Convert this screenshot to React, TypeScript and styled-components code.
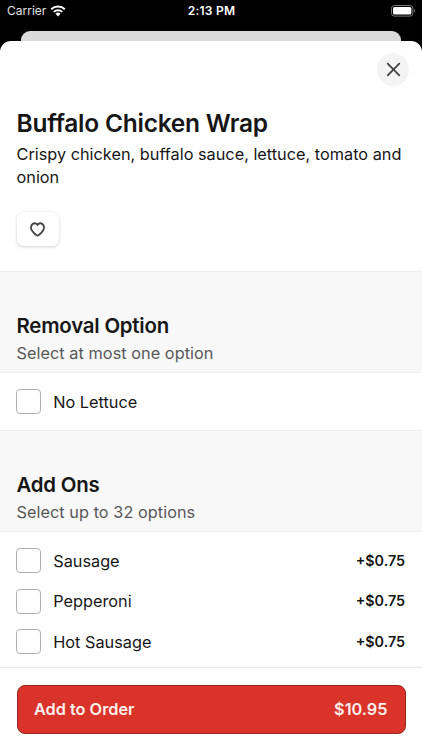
import React from "react";
import styled, { createGlobalStyle } from "styled-components";

const GlobalStyle = createGlobalStyle`
  * { box-sizing: border-box; }
  html, body { margin: 0; padding: 0; background: #000; }
  button { font: inherit; border: 0; margin: 0; padding: 0; }
  h1, h2, p { margin: 0; }
`;

const Screen = styled.div`
  width: 422px;
  height: 750px;
  overflow: hidden;
  display: flex;
  flex-direction: column;
  background: #000;
  color: #161616;
  font-family: Inter, sans-serif;
`;

const StatusBar = styled.div`
  flex: none;
  height: 31px;
  padding: 0 6px 9px 7px;
  display: grid;
  grid-template-columns: 1fr auto 1fr;
  align-items: center;
  color: #fff;
  font-size: 12px;
  line-height: 22px;
`;

const Carrier = styled.div`
  display: flex;
  align-items: center;
  gap: 4px;
  color: #e4e4e4;
`;

const Clock = styled.div`
  font-weight: 600;
  letter-spacing: 0.25px;
`;

const BatterySlot = styled.div`
  display: flex;
  justify-content: flex-end;
`;

const BackSheet = styled.div`
  flex: none;
  height: 10px;
  margin: 0 21px;
  border-radius: 9px 9px 0 0;
  background: #dadada;
`;

const Sheet = styled.main`
  flex: 1;
  min-height: 0;
  display: flex;
  flex-direction: column;
  background: #fff;
  border-radius: 11px 11px 0 0;
`;

const Intro = styled.header`
  flex: none;
  height: 230px;
  padding: 12px 13px 0 16.5px;
  display: flex;
  flex-direction: column;
`;

const CloseButton = styled.button`
  align-self: flex-end;
  width: 32px;
  height: 33px;
  border-radius: 50%;
  background: #f4f4f4;
  display: grid;
  place-items: center;
`;

const Title = styled.h1`
  margin-top: 22px;
  font-size: 24.5px;
  line-height: 30px;
  font-weight: 600;
  letter-spacing: -0.24px;
  white-space: nowrap;
`;

const Description = styled.p`
  margin-top: 5px;
  font-size: 16.3px;
  line-height: 22.5px;
`;

const FavoriteButton = styled.button`
  margin-top: 24px;
  width: 42px;
  height: 34px;
  border-radius: 7px;
  background: #fff;
  box-shadow: 0 0 0 0.5px #ededed, 0 1px 3px rgba(0, 0, 0, 0.22);
  display: grid;
  place-items: center;
`;

const SectionHeader = styled.div<{ $height: number }>`
  flex: none;
  height: ${(p) => p.$height}px;
  padding: 0 16.5px 8px;
  display: flex;
  flex-direction: column;
  justify-content: flex-end;
  background: #f8f8f8;
  border-top: 1px solid #ececec;
  border-bottom: 1px solid #ececec;
`;

const SectionTitle = styled.h2`
  font-size: 20.4px;
  line-height: 28px;
  font-weight: 600;
  letter-spacing: -0.2px;
`;

const SectionHint = styled.p`
  margin-top: 2px;
  font-size: 16.3px;
  line-height: 22px;
  letter-spacing: 0.04px;
  color: #575757;
`;

const OptionList = styled.div<{ $height: number; $top: number }>`
  flex: none;
  height: ${(p) => p.$height}px;
  padding: ${(p) => p.$top}px 17px 0 16px;
  overflow: hidden;
`;

const OptionRow = styled.label`
  height: 40.6px;
  display: flex;
  align-items: center;
  font-size: 16.3px;
  line-height: 22px;
`;

const Checkbox = styled.span`
  width: 25px;
  height: 25px;
  margin-right: 12.2px;
  border: 1px solid #b0b0b0;
  border-radius: 4px;
  background: #fff;
`;

const OptionPrice = styled.span`
  margin-left: auto;
  font-size: 14.3px;
  font-weight: 600;
`;

const Footer = styled.footer`
  flex: 1;
  padding: 17px 16.5px 0;
  border-top: 1px solid #e9e9e9;
  box-shadow: 0 -1px 1px rgba(0, 0, 0, 0.025);
`;

const OrderButton = styled.button`
  width: 100%;
  height: 48.5px;
  padding: 0 17px 1px 16.5px;
  display: flex;
  align-items: center;
  justify-content: space-between;
  border: 1px solid #942820;
  border-radius: 8px;
  background: #da3329;
  color: #fff0ee;
  font-size: 16.3px;
  font-weight: 600;
`;

const WifiIcon = () => (
  <svg width="16" height="12" viewBox="0 0 16 12" fill="#fff" aria-hidden>
    <path d="M8 11.4 5.5 8.8a3.6 3.6 0 0 1 5 0z" />
    <path d="M3.7 6.9a6.2 6.2 0 0 1 8.6 0M1.2 4.2a9.7 9.7 0 0 1 13.6 0" fill="none" stroke="#fff" strokeWidth="2" />
  </svg>
);

const BatteryIcon = () => (
  <svg width="25" height="12" viewBox="0 0 25 12" aria-hidden>
    <rect x="0.5" y="0.5" width="21.4" height="10.6" rx="2.8" fill="none" stroke="#777" />
    <rect x="2" y="2" width="18.4" height="7.6" rx="1.5" fill="#fff" />
    <path d="M23.1 4v3.7c1.5-.6 1.5-3.1 0-3.7z" fill="#777" />
  </svg>
);

const CloseIcon = () => (
  <svg width="15" height="15" viewBox="0 0 15 15" aria-hidden>
    <path d="M1.7 1.7 13.3 13.3M13.3 1.7 1.7 13.3" stroke="#3f3f3f" strokeWidth="1.7" strokeLinecap="round" />
  </svg>
);

const HeartIcon = () => (
  <svg width="15" height="15" viewBox="0 0 16 15" preserveAspectRatio="none" aria-hidden>
    <path
      d="M8 2.9C6.8 1.4 4.7.9 3 1.9.8 3.2.6 6.1 1.9 8.2c1.3 2 3.5 4 5.1 5.1q1 .7 2 0c1.6-1.1 3.8-3.1 5.1-5.1 1.3-2.1 1.1-5-1.1-6.3-1.7-1-3.8-.5-5 1Z"
      fill="none"
      stroke="#424447"
      strokeWidth="1.9"
      strokeLinejoin="round"
    />
  </svg>
);

interface OptionProps {
  name: string;
  price?: string;
}

const Option = ({ name, price }: OptionProps) => (
  <OptionRow>
    <Checkbox role="checkbox" aria-checked={false} />
    <span>{name}</span>
    {price && <OptionPrice>{price}</OptionPrice>}
  </OptionRow>
);

const addOns: OptionProps[] = [
  { name: "Sausage", price: "+$0.75" },
  { name: "Pepperoni", price: "+$0.75" },
  { name: "Hot Sausage", price: "+$0.75" },
];

export default function App() {
  return (
    <Screen>
      <GlobalStyle />
      <StatusBar>
        <Carrier>
          <span>Carrier</span>
          <WifiIcon />
        </Carrier>
        <Clock>2:13 PM</Clock>
        <BatterySlot>
          <BatteryIcon />
        </BatterySlot>
      </StatusBar>
      <BackSheet />
      <Sheet>
        <Intro>
          <CloseButton aria-label="Close">
            <CloseIcon />
          </CloseButton>
          <Title>Buffalo Chicken Wrap</Title>
          <Description>Crispy chicken, buffalo sauce, lettuce, tomato and onion</Description>
          <FavoriteButton aria-label="Add to favorites">
            <HeartIcon />
          </FavoriteButton>
        </Intro>
        <SectionHeader $height={102}>
          <SectionTitle>Removal Option</SectionTitle>
          <SectionHint>Select at most one option</SectionHint>
        </SectionHeader>
        <OptionList $height={57} $top={8.4}>
          <Option name="No Lettuce" />
        </OptionList>
        <SectionHeader $height={102}>
          <SectionTitle>Add Ons</SectionTitle>
          <SectionHint>Select up to 32 options</SectionHint>
        </SectionHeader>
        <OptionList $height={135} $top={8.3}>
          {addOns.map((o) => (
            <Option key={o.name} {...o} />
          ))}
        </OptionList>
        <Footer>
          <OrderButton>
            <span>Add to Order</span>
            <span>$10.95</span>
          </OrderButton>
        </Footer>
      </Sheet>
    </Screen>
  );
}
